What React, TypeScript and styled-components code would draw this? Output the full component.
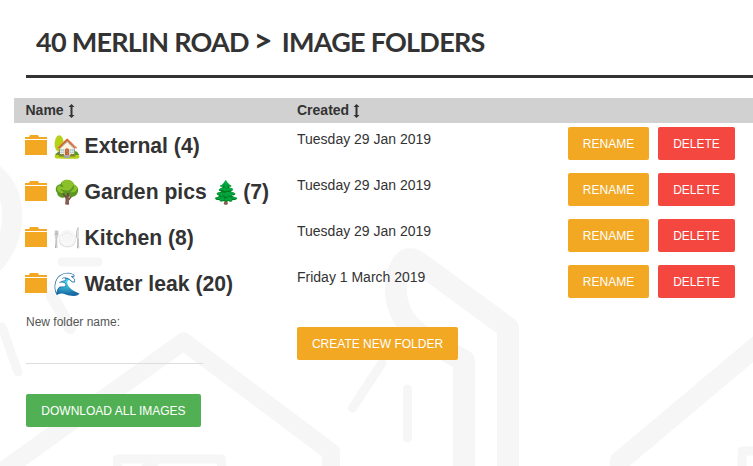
import { Fragment } from "react";
import styled, { createGlobalStyle } from "styled-components";

const GlobalStyle = createGlobalStyle`
	html, body {
		margin: 0;
		padding: 0;
		background: #fff;
		color: #333;
		font-family: "Liberation Sans", Arial, sans-serif;
		overflow: hidden;
	}
`;

const Page = styled.div`
	position: relative;
	width: 753px;
	height: 466px;
	overflow: hidden;
`;

const Watermark = styled.svg`
	position: absolute;
	left: 0;
	top: 0;
	z-index: 0;
`;

const Content = styled.div`
	position: relative;
	z-index: 1;
	padding: 25px 0 0 14px;
`;

const Heading = styled.h1`
	margin: 0 0 20px 12px;
	padding: 0 0 17px 10px;
	height: 33px;
	border-bottom: 3px solid #333;
	font-family: Lato, sans-serif;
	font-size: 27px;
	line-height: 33px;
	font-weight: 700;
	letter-spacing: -0.75px;
	color: #333;
`;

const Chevron = styled.span`
	margin: 0 4px 0 -1px;
	font-size: 33px;
	line-height: 0;
	font-weight: 700;
`;

const Table = styled.div`
	display: grid;
	grid-template-columns: 283px 271px 1fr;
`;

const HeaderCell = styled.div`
	background: #d1d1d1;
	height: 25px;
	line-height: 25px;
	font-size: 14px;
	font-weight: 700;
	padding-left: 11.5px;
	display: flex;
	align-items: center;
	gap: 4px;
	&:nth-child(2) {
		padding-left: 0;
	}
`;

const NameCell = styled.div`
	height: 46px;
	padding-left: 11px;
	display: flex;
	align-items: center;
	font-size: 21.15px;
	font-weight: 700;
	white-space: nowrap;
`;

const DateCell = styled.div`
	height: 46px;
	font-size: 14px;
	line-height: 16px;
	padding-top: 8px;
	box-sizing: border-box;
`;

const Actions = styled.div`
	height: 46px;
	display: flex;
	gap: 9px;
	padding-top: 4px;
	box-sizing: border-box;
`;

const Button = styled.button<{ $bg: string; $w: number }>`
	display: block;
	width: ${p => p.$w}px;
	height: 33px;
	border: 0;
	border-radius: 2px;
	padding: 0;
	background: ${p => p.$bg};
	color: #fff;
	font-family: "Liberation Sans", Arial, sans-serif;
	font-size: 12px;
	text-transform: uppercase;
`;

const FolderIcon = styled.svg`
	margin: -3px 7px 0 0;
	flex: none;
`;

const Emoji = styled.span`
	margin-right: 4px;
	font-family: "Noto Color Emoji", sans-serif;
	font-size: 21.3px;
	font-weight: 400;
	display: inline-block;
	transform: scale(1.06);
	transform-origin: 50% 50%;
`;

const Sort = styled.svg`
	flex: none;
`;

const Footer = styled.div`
	display: grid;
	grid-template-columns: 271px 1fr;
	padding-left: 12px;
	margin-top: 8px;
`;

const Field = styled.div`
	width: 177px;
`;

const Label = styled.div`
	font-size: 12px;
	line-height: 14px;
	color: #555;
`;

const Input = styled.div`
	margin-top: 13px;
	margin-bottom: 30px;
	height: 21px;
	border-bottom: 1px solid #ddd;
`;

const CreateSlot = styled.div`
	padding-top: 12px;
`;

const rows = [
	{ name: "External", emoji: "🏡", count: 4, date: "Tuesday 29 Jan 2019" },
	{ name: "Garden pics", emoji: "🌳", extra: "🌲", count: 7, date: "Tuesday 29 Jan 2019" },
	{ name: "Kitchen", emoji: "🍽️", count: 8, date: "Tuesday 29 Jan 2019" },
	{ name: "Water leak", emoji: "🌊", count: 20, date: "Friday 1 March 2019" },
];

function SortIcon() {
	return (
		<Sort width="7" height="14" viewBox="0 0 7 14">
			<path d="M3.5 0 6.5 3H4.5V11H6.5L3.5 14 .5 11H2.5V3H.5Z" fill="#333" />
		</Sort>
	);
}

function Folder() {
	return (
		<FolderIcon width="22" height="20" viewBox="0 0 22 20">
			<path d="M5 0H13L14 2H22V4H0V2H4Z" fill="#f2a823" />
			<path d="M0 5H22V20H0Z" fill="#f2a823" />
		</FolderIcon>
	);
}

export default function App() {
	return (
		<Page>
			<GlobalStyle />
			<Watermark width="753" height="466" viewBox="0 0 753 466" fill="none" stroke="#f6f6f6" strokeLinecap="round" strokeLinejoin="round">
				<path d="M-20 487 183.5 341.5 331 452V490" strokeWidth="18" />
				<path d="M117.5 490V459H221.5V490" strokeWidth="9" />
				<path d="M150 459V490" strokeWidth="16" strokeLinecap="butt" />
				<path d="M508 490V328L418 262C404 252 396 270 396 290 396 310 405 325 425 338L464 361V490" strokeWidth="22" />
				<path d="M407.5 389V438" strokeWidth="9" />
				<path d="M382 363 352.5 408" strokeWidth="9" />
				<path d="M2 327 18 372" strokeWidth="9" />
				<path d="M620 490V461L770 335" strokeWidth="20" />
				<path d="M742 490V451H770" strokeWidth="9" />
				<path d="M-5 175C18 195 18 235-5 262" strokeWidth="20" />
				<path d="M62 262H98" strokeWidth="9" />
				<path d="M52 296 70 328" strokeWidth="12" />
			</Watermark>
			<Content>
				<Heading>40 MERLIN ROAD <Chevron>&gt;</Chevron> IMAGE FOLDERS</Heading>
				<Table>
					<HeaderCell>Name <SortIcon /></HeaderCell>
					<HeaderCell>Created <SortIcon /></HeaderCell>
					<HeaderCell />
					{rows.map(row => (
						<Fragment key={row.name}>
							<NameCell>
								<Folder />
								<Emoji>{row.emoji}</Emoji>
								{row.name}&nbsp;
								{row.extra && <Emoji>{row.extra}</Emoji>}
								({row.count})
							</NameCell>
							<DateCell>{row.date}</DateCell>
							<Actions>
								<Button $bg="#f2a823" $w={81}>Rename</Button>
								<Button $bg="#f44740" $w={77}>Delete</Button>
							</Actions>
						</Fragment>
					))}
				</Table>
				<Footer>
					<Field>
						<Label>New folder name:</Label>
						<Input />
						<Button $bg="#52b054" $w={175}>Download all images</Button>
					</Field>
					<CreateSlot>
						<Button $bg="#f2a823" $w={161}>Create new folder</Button>
					</CreateSlot>
				</Footer>
			</Content>
		</Page>
	);
}
